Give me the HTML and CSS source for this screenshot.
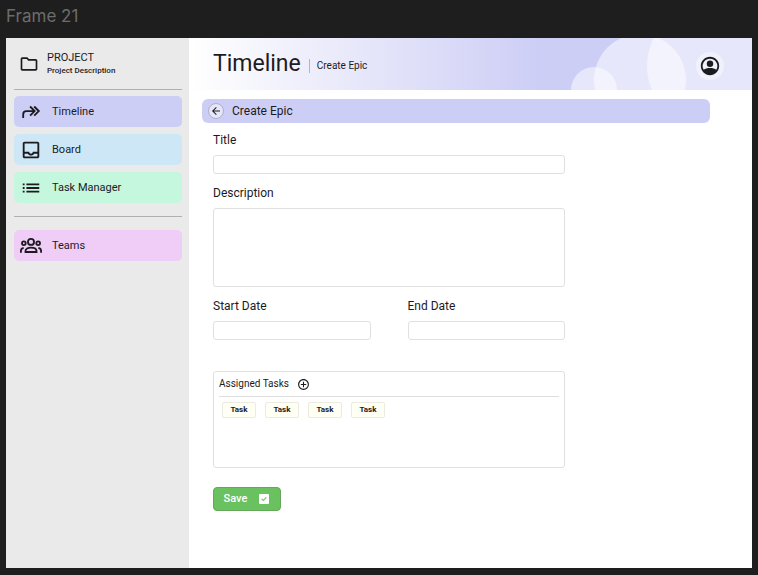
FILE: index.html
```html
<!DOCTYPE html>
<html lang="en">
<head>
<meta charset="utf-8">
<title>Timeline - Create Epic</title>
<link rel="stylesheet" href="styles.css">
</head>
<body>
<div class="frame-label">Frame 21</div>
<div class="frame">
  <aside class="sidebar">
    <div class="project">
      <svg class="project-icon" viewBox="0 0 24 24" aria-hidden="true"><path d="M9.170 6l2 2H20v10H4V6h5.170M10 4H4c-1.100 0-2 .9-2 2v12c0 1.100.9 2 2 2h16c1.100 0 2-.9 2-2V8c0-1.100-.9-2-2-2h-8z"/></svg>
      <div>
        <div class="project-name">PROJECT</div>
        <div class="project-desc">Project Description</div>
      </div>
    </div>
    <nav class="nav">
      <a class="nav-item timeline" href="#">
        <svg class="stroke" viewBox="0 0 24 24" aria-hidden="true"><path d="M3.500 18.500v-4c0-2.300 1.400-3.500 3.500-3.500H15M11 6l5 5-5 5M15.500 6l5 5-5 5"/></svg>
        Timeline
      </a>
      <a class="nav-item board" href="#">
        <svg viewBox="0 0 24 24" aria-hidden="true"><path d="M19 3H5c-1.100 0-2 .9-2 2v14c0 1.100.9 2 2 2h14c1.100 0 2-.9 2-2V5c0-1.100-.9-2-2-2zm0 16H5v-3h3.560c.69 1.190 1.970 2 3.450 2s2.750-.81 3.450-2H19v3zm0-5h-4.990c0 1.100-.9 2-2 2s-2-.9-2-2H5V5h14v9z"/></svg>
        Board
      </a>
      <a class="nav-item tasks" href="#">
        <svg viewBox="0 0 24 24" aria-hidden="true"><path d="M3 7h2v2H3zM3 11h2v2H3zM3 15h2v2H3zM7 7h14v2H7zM7 11h14v2H7zM7 15h14v2H7z"/></svg>
        Task Manager
      </a>
    </nav>
    <nav class="nav">
      <a class="nav-item teams" href="#">
        <svg class="stroke people" viewBox="0 0 24 24" aria-hidden="true"><circle cx="12" cy="7.500" r="3.300"/><circle cx="4.200" cy="9" r="2"/><circle cx="19.800" cy="9" r="2"/><path d="M6 18.500v-1c0-2.300 2.500-3.700 6-3.700s6 1.400 6 3.700v1zM1 19.300v-2c0-1.700 1-2.800 3-3.200M23 19.300v-2c0-1.700-1-2.800-3-3.200"/></svg>
        Teams
      </a>
    </nav>
  </aside>
  <main class="main">
    <header class="header">
      <svg class="bubbles" viewBox="0 0 182 52" aria-hidden="true">
        <circle cx="24" cy="52" r="23"/><circle cx="70" cy="42" r="46"/><circle cx="138" cy="28" r="61"/>
      </svg>
      <h1 class="title">Timeline</h1>
      <span class="crumb">Create Epic</span>
      <button class="account" type="button" aria-label="Account">
        <svg viewBox="0 0 24 24" aria-hidden="true"><path d="M12 2C6.480 2 2 6.480 2 12s4.480 10 10 10 10-4.480 10-10S17.520 2 12 2zM12 4a8 8 0 0 1 6.800 12.200C17.300 14.900 14.900 14.200 12 14.200s-5.300.7-6.800 2A8 8 0 0 1 12 4z" fill-rule="evenodd"/><circle cx="12" cy="9.500" r="3.500"/></svg>
      </button>
    </header>
    <div class="banner">
      <button class="back" type="button" aria-label="Back">
        <svg viewBox="0 0 24 24" aria-hidden="true"><path d="M20 11H7.830l5.590-5.590L12 4l-8 8 8 8 1.410-1.410L7.830 13H20z"/></svg>
      </button>
      <h2 class="banner-title">Create Epic</h2>
    </div>
    <form class="form">
      <label class="field">Title<input class="box" type="text"></label>
      <label class="field">Description<textarea class="box area"></textarea></label>
      <div class="dates">
        <label class="field">Start Date<input class="box" type="text"></label>
        <label class="field">End Date<input class="box" type="text"></label>
      </div>
      <section class="assigned">
        <div class="assigned-head">
          <h3 class="assigned-title">Assigned Tasks</h3>
          <button class="add" type="button" aria-label="Add task">
            <svg viewBox="0 0 24 24" aria-hidden="true"><path d="M13 7h-2v4H7v2h4v4h2v-4h4v-2h-4V7zm-1-5C6.480 2 2 6.480 2 12s4.480 10 10 10 10-4.480 10-10S17.520 2 12 2zm0 18c-4.410 0-8-3.590-8-8s3.590-8 8-8 8 3.590 8 8-3.590 8-8 8z"/></svg>
          </button>
        </div>
        <div class="chips">
          <span class="chip">Task</span><span class="chip">Task</span><span class="chip">Task</span><span class="chip">Task</span>
        </div>
      </section>
      <button class="save" type="button">Save
        <svg viewBox="0 0 24 24" aria-hidden="true"><path fill-rule="evenodd" d="M4 2h16a2 2 0 0 1 2 2v16a2 2 0 0 1-2 2H4a2 2 0 0 1-2-2V4a2 2 0 0 1 2-2zM10.500 16.500l7-7-1.500-1.500-5.500 5.500-2.500-2.500L6.500 12.500z"/></svg>
      </button>
    </form>
  </main>
</div>
</body>
</html>
```
FILE: styles.css
```css
* {
  box-sizing: border-box;
}

body {
  margin: 0;
  padding: 0 6px 7px;
  background: #1e1e1e;
  color: #1c1b1f;
  font-family: Roboto, "Liberation Sans", sans-serif;
  font-size: 12px;
  line-height: 16px;
}

h1, h2, h3 {
  margin: 0;
  font-weight: 400;
}

button {
  padding: 0;
  border: 0;
  background: none;
  color: inherit;
  font: inherit;
}

svg {
  display: block;
  fill: currentColor;
}

.frame-label {
  height: 38px;
  padding-top: 6px;
  color: #6c6c6c;
  font-family: Inter, sans-serif;
  font-size: 17px;
  line-height: 20px;
}

.frame {
  display: flex;
  min-height: calc(100vh - 45px);
  background: #fff;
}

.sidebar {
  flex: 0 0 183px;
  padding: 0 7px 0 8px;
  background: #eaeaea;
}

.project {
  display: flex;
  align-items: center;
  gap: 8px;
  height: 51px;
  padding-left: 5px;
}

.project-icon {
  width: 20px;
  height: 20px;
}

.project-name {
  font-size: 11px;
  line-height: 14px;
}

.project-desc {
  font-size: 8px;
  font-weight: 500;
  line-height: 12px;
}

.nav {
  display: flex;
  flex-direction: column;
  gap: 7px;
  padding: 6px 0 13px;
  border-top: 1px solid #b0b0b0;
}

.nav + .nav {
  padding-top: 13px;
}

.nav-item {
  display: flex;
  align-items: center;
  gap: 10px;
  height: 31px;
  padding-left: 6px;
  border-radius: 5px;
  color: inherit;
  font-size: 11px;
  text-decoration: none;
}

.nav-item svg {
  width: 22px;
  height: 22px;
}

.nav-item .stroke {
  fill: none;
  stroke: currentColor;
  stroke-width: 2;
}

.nav-item .people {
  overflow: visible;
}

.timeline {
  background: #cdcef5;
}

.board {
  background: #cee7f6;
}

.tasks {
  background: #c5f6de;
}

.teams {
  background: #efcdf6;
}

.main {
  flex: 1;
  min-width: 0;
}

.header {
  position: relative;
  display: flex;
  align-items: center;
  height: 52px;
  padding: 4px 28px 0 24px;
  background: linear-gradient(90deg, #fff, #cdcef5 350px);
}

.bubbles {
  position: absolute;
  top: 0;
  right: 0;
  width: 182px;
  height: 52px;
  fill: rgba(255, 255, 255, 0.5);
}

.title {
  padding-bottom: 4px;
  font-size: 23px;
  line-height: 40px;
}

.crumb {
  margin-left: 8px;
  padding-left: 7px;
  border-left: 1px solid #b4b4c4;
  font-size: 10px;
  line-height: 14px;
}

.account {
  position: relative;
  display: grid;
  place-items: center;
  width: 28px;
  height: 28px;
  margin-left: auto;
  border-radius: 50%;
  background: #f1f1fc;
}

.account svg {
  width: 22px;
  height: 22px;
}

.banner {
  display: flex;
  align-items: center;
  gap: 8px;
  height: 24px;
  margin: 9px 42px 0 13px;
  padding-left: 6px;
  border-radius: 6px;
  background: #cdcef5;
}

.back {
  display: grid;
  place-items: center;
  width: 16px;
  height: 16px;
  border: 1px solid #b0b0c4;
  border-radius: 50%;
  background: #e6e6fa;
}

.back svg {
  width: 12px;
  height: 12px;
}

.banner-title {
  font-size: 12px;
}

.form {
  display: flex;
  flex-direction: column;
  gap: 11px;
  max-width: 376px;
  padding: 9px 0 24px 24px;
}

.field {
  display: flex;
  flex-direction: column;
  gap: 7px;
  flex: 1;
}

.box {
  display: block;
  width: 100%;
  min-width: 0;
  height: 19px;
  margin: 0;
  padding: 0 6px;
  border: 1px solid #e0e0e0;
  border-radius: 3px;
  background: #fff;
  font: inherit;
}

.area {
  height: 79px;
  resize: none;
}

.dates {
  display: flex;
  gap: 37px;
}

.assigned {
  min-height: 97px;
  margin-top: 20px;
  padding: 0 5px;
  border: 1px solid #e0e0e0;
  border-radius: 3px;
}

.assigned-head {
  display: flex;
  align-items: center;
  gap: 8px;
  height: 25px;
  border-bottom: 1px solid #dedede;
}

.assigned-title {
  font-size: 10px;
}

.add svg {
  width: 13px;
  height: 13px;
}

.chips {
  display: flex;
  flex-wrap: wrap;
  gap: 9px;
  padding: 5px 3px;
}

.chip {
  width: 34px;
  border: 1px solid #ecebe0;
  border-radius: 2px;
  background: #fffff4;
  font-size: 8px;
  font-weight: 700;
  line-height: 14px;
  text-align: center;
}

.save {
  display: flex;
  align-items: center;
  justify-content: center;
  gap: 11px;
  width: 68px;
  height: 24px;
  margin-top: 8px;
  border: 1px solid #62a858;
  border-radius: 4px;
  background: #6ac15f;
  color: #fff;
  font-size: 11px;
  font-weight: 500;
}

.save svg {
  width: 12px;
  height: 12px;
}
```
